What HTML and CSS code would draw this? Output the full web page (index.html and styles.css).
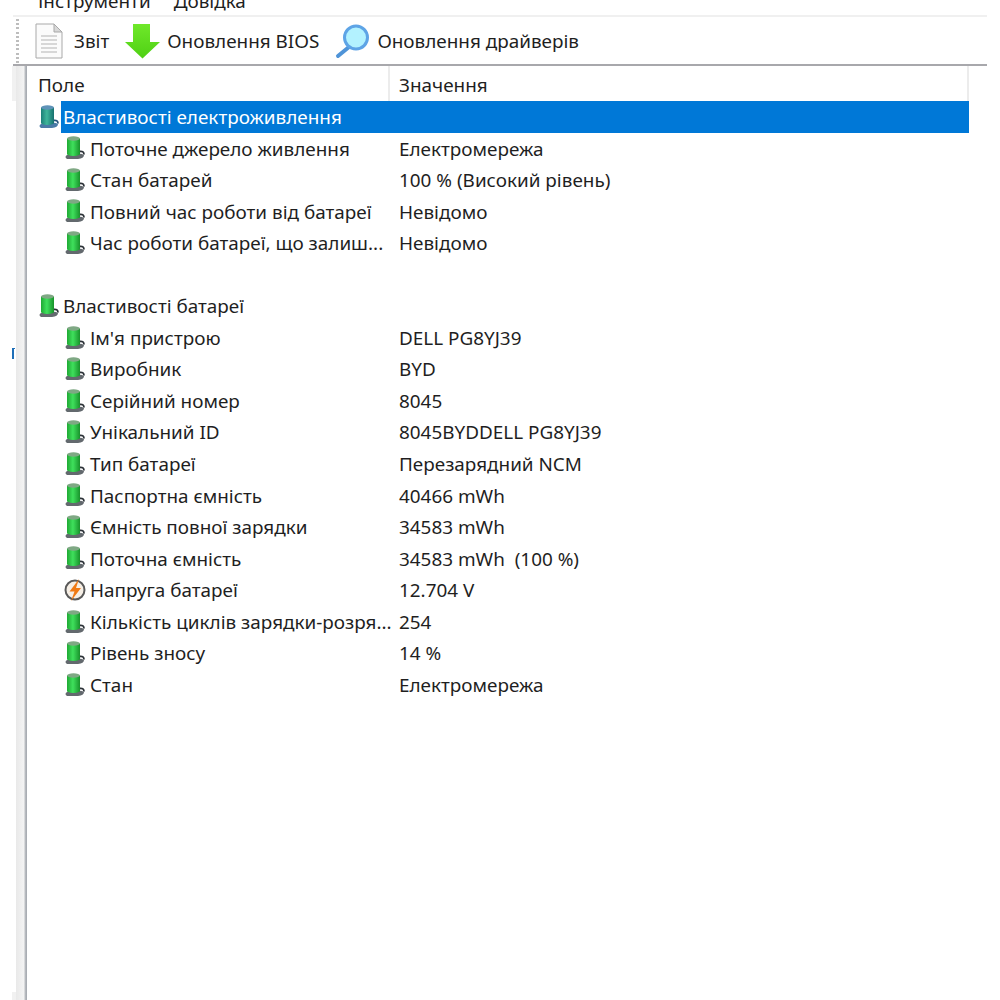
FILE: index.html
```html
<!DOCTYPE html>
<html lang="uk">

<head>
  <meta charset="UTF-8" />
  <meta name="viewport" content="width=device-width, initial-scale=1.0" />
  <title>Електроживлення</title>
  <link rel="stylesheet" href="styles.css">
</head>

<body>
  <svg class="icon-defs" width="0" height="0">
    <defs>
      <linearGradient id="green-body" x1="0" x2="1" y1="0" y2="0">
        <stop offset="0" stop-color="#1fa934" />
        <stop offset="0.45" stop-color="#3fe05c" />
        <stop offset="1" stop-color="#18922b" />
      </linearGradient>
      <linearGradient id="teal-body" x1="0" x2="1" y1="0" y2="0">
        <stop offset="0" stop-color="#1c7f78" />
        <stop offset="0.45" stop-color="#3fb59a" />
        <stop offset="1" stop-color="#17706f" />
      </linearGradient>
      <linearGradient id="arrow-fill" x1="0" x2="0" y1="0" y2="1">
        <stop offset="0" stop-color="#6fe82a" />
        <stop offset="1" stop-color="#4fd014" />
      </linearGradient>
      <symbol id="battery" viewBox="0 0 22 24">
        <path d="M3 19q-3 2 0 4h11q6-.5 6-4-3-2-6-1z" fill="#63696e" />
        <path d="M15 15.500q5-1 5 3" fill="none" stroke="#2c3238" stroke-width="1.800" />
        <path d="M3 2.500h13v16q-6.500 3-13 0z" fill="url(#green-body)" />
        <ellipse cx="9.500" cy="2.500" rx="6.500" ry="2.200" fill="#7fa884" />
      </symbol>
      <symbol id="battery-selected" viewBox="0 0 22 24">
        <path d="M3 19q-3 2 0 4h11q6-.5 6-4-3-2-6-1z" fill="#4a7aa6" />
        <path d="M15 15.500q5-1 5 3" fill="none" stroke="#24527c" stroke-width="1.800" />
        <path d="M3 2.500h13v16q-6.500 3-13 0z" fill="url(#teal-body)" />
        <ellipse cx="9.500" cy="2.500" rx="6.500" ry="2.200" fill="#5f93b8" />
      </symbol>
    </defs>
  </svg>

  <div class="menu-bar">
    <span>Інструменти</span>
    <span>Довідка</span>
  </div>

  <div class="tool-bar">
    <div class="tool tool-report">
      <svg width="28" height="36" viewBox="0 0 28 36">
        <path d="M1 1h18l8 8v26H1z" fill="#fbfbfb" stroke="#a9a9a9" />
        <path d="M19 1v8h8z" fill="#d8d8d8" stroke="#a9a9a9" />
        <path d="M6 13h16M6 17h16M6 21h16M6 25h16M6 29h16" stroke="#b4b4b4" stroke-width="1.200" />
      </svg>
      <span>Звіт</span>
    </div>
    <div class="tool tool-bios">
      <svg width="36" height="36" viewBox="0 0 36 36">
        <path d="M8 1h17v18h10L17.500 35.500 0 19h8z" fill="url(#arrow-fill)" />
      </svg>
      <span>Оновлення BIOS</span>
    </div>
    <div class="tool tool-drivers">
      <svg width="36" height="36" viewBox="0 0 36 36">
        <path d="M14 24L3 33" stroke="#4f94d8" stroke-width="4" stroke-linecap="round" />
        <circle cx="21" cy="14.500" r="11.500" fill="#b3f2ff" stroke="#5ea4e6" stroke-width="3" />
      </svg>
      <span>Оновлення драйверів</span>
    </div>
  </div>

  <div class="main">
    <div class="side-rail"></div>
    <div class="list">
      <div class="list-head">
        <div class="head-cell head-field">Поле</div>
        <div class="head-cell head-value">Значення</div>
      </div>

      <div class="row group selected">
        <svg class="row-icon"><use href="#battery-selected" /></svg>
        <div class="row-name">Властивості електроживлення</div>
      </div>
      <div class="row">
        <svg class="row-icon"><use href="#battery" /></svg>
        <div class="row-name">Поточне джерело живлення</div>
        <div class="row-value">Електромережа</div>
      </div>
      <div class="row">
        <svg class="row-icon"><use href="#battery" /></svg>
        <div class="row-name">Стан батарей</div>
        <div class="row-value">100 % (Високий рівень)</div>
      </div>
      <div class="row">
        <svg class="row-icon"><use href="#battery" /></svg>
        <div class="row-name">Повний час роботи від батареї</div>
        <div class="row-value">Невідомо</div>
      </div>
      <div class="row">
        <svg class="row-icon"><use href="#battery" /></svg>
        <div class="row-name">Час роботи батареї, що залиш...</div>
        <div class="row-value">Невідомо</div>
      </div>

      <div class="row"></div>

      <div class="row group">
        <svg class="row-icon"><use href="#battery" /></svg>
        <div class="row-name">Властивості батареї</div>
      </div>
      <div class="row">
        <svg class="row-icon"><use href="#battery" /></svg>
        <div class="row-name">Ім'я пристрою</div>
        <div class="row-value">DELL PG8YJ39</div>
      </div>
      <div class="row">
        <svg class="row-icon"><use href="#battery" /></svg>
        <div class="row-name">Виробник</div>
        <div class="row-value">BYD</div>
      </div>
      <div class="row">
        <svg class="row-icon"><use href="#battery" /></svg>
        <div class="row-name">Серійний номер</div>
        <div class="row-value">8045</div>
      </div>
      <div class="row">
        <svg class="row-icon"><use href="#battery" /></svg>
        <div class="row-name">Унікальний ID</div>
        <div class="row-value">8045BYDDELL PG8YJ39</div>
      </div>
      <div class="row">
        <svg class="row-icon"><use href="#battery" /></svg>
        <div class="row-name">Тип батареї</div>
        <div class="row-value">Перезарядний NCM</div>
      </div>
      <div class="row">
        <svg class="row-icon"><use href="#battery" /></svg>
        <div class="row-name">Паспортна ємність</div>
        <div class="row-value">40466 mWh</div>
      </div>
      <div class="row">
        <svg class="row-icon"><use href="#battery" /></svg>
        <div class="row-name">Ємність повної зарядки</div>
        <div class="row-value">34583 mWh</div>
      </div>
      <div class="row">
        <svg class="row-icon"><use href="#battery" /></svg>
        <div class="row-name">Поточна ємність</div>
        <div class="row-value">34583 mWh&nbsp; (100 %)</div>
      </div>
      <div class="row">
        <svg class="row-icon" viewBox="0 0 22 24">
          <circle cx="11" cy="12" r="9.500" fill="#f6efe6" stroke="#595959" stroke-width="2" />
          <path d="M15 1L5.500 13.500h5L7 23l10-13h-5z" fill="#f07a14" />
        </svg>
        <div class="row-name">Напруга батареї</div>
        <div class="row-value">12.704 V</div>
      </div>
      <div class="row">
        <svg class="row-icon"><use href="#battery" /></svg>
        <div class="row-name">Кількість циклів зарядки-розря...</div>
        <div class="row-value">254</div>
      </div>
      <div class="row">
        <svg class="row-icon"><use href="#battery" /></svg>
        <div class="row-name">Рівень зносу</div>
        <div class="row-value">14 %</div>
      </div>
      <div class="row">
        <svg class="row-icon"><use href="#battery" /></svg>
        <div class="row-name">Стан</div>
        <div class="row-value">Електромережа</div>
      </div>
    </div>
  </div>
  <div class="stray-mark"></div>
</body>

</html>
```

FILE: styles.css
```css
body {
  font-family: "Noto Sans", "Open Sans", sans-serif;
  font-size: 18.9px;
  margin: 0;
  padding: 0;
  background-color: #ffffff;
  color: #1f1f1f;
  height: 1000px;
  overflow: hidden;
}

.icon-defs {
  display: block;
  height: 0;
}

.menu-bar {
  display: flex;
  align-items: flex-end;
  gap: 23px;
  height: 13px;
  padding-left: 38px;
  padding-bottom: 2px;
  overflow: hidden;
  line-height: 24px;
}

.tool-bar {
  display: flex;
  align-items: center;
  height: 47px;
  width: 974px;
  margin-left: 13px;
  border-top: 2px solid #f0f0f0;
  border-bottom: 2px solid #a8a8ac;
}

/* dotted grip at the start of the toolbar */
.tool-bar::before {
  content: "";
  width: 3px;
  height: 44px;
  margin-left: 3px;
  background: repeating-linear-gradient(to bottom, #bdbdbd 0, #bdbdbd 2px, #ffffff 2px, #ffffff 4.2px);
}

.tool {
  display: flex;
  align-items: center;
}

.tool-report {
  margin-left: 16px;
  gap: 11px;
}

.tool-bios {
  margin-left: 16px;
  gap: 6px;
}

.tool-drivers {
  margin-left: 16px;
  gap: 6px;
}

.main {
  display: flex;
  height: 936px;
}

/* grey strip on the left of the list */
.side-rail {
  position: relative;
  width: 11px;
  margin-left: 16px;
  background: linear-gradient(to right, #e9e9e9, #f3f3f3 70%, #a9adb3 90%);
  flex-shrink: 0;
}

.side-rail::before,
.side-rail::after {
  content: "";
  position: absolute;
  left: -4px;
  width: 4px;
  background-color: #f1f1f1;
}

.side-rail::before {
  top: 0;
  height: 35px;
}

.side-rail::after {
  top: 926px;
  height: 10px;
}

.list {
  width: 941px;
  margin-left: 1px;
}

.list-head {
  display: flex;
  height: 35px;
}

.head-cell {
  height: 35px;
  line-height: 38px;
  box-sizing: border-box;
}

.head-field {
  width: 362px;
  padding-left: 10px;
  border-right: 2px solid #ececec;
}

.head-value {
  flex-grow: 1;
  padding-left: 9px;
  border-right: 2px solid #ececec;
}

.row {
  display: flex;
  align-items: center;
  height: 31.55px;
  white-space: nowrap;
}

.row-icon {
  width: 22px;
  height: 24px;
  flex-shrink: 0;
  margin-left: 36px;
}

.row-name,
.row-value {
  height: 31.55px;
  line-height: 33.5px;
}

.row-name {
  width: 291px;
  flex-shrink: 0;
  margin-left: 4px;
}

.row-value {
  margin-left: 18px;
}

.group .row-icon {
  margin-left: 10px;
}

.group .row-name {
  width: auto;
  margin-left: 3px;
}

.selected .row-name {
  flex-grow: 1;
  margin-left: 1px;
  padding-left: 2px;
  background-color: #0078d7;
  color: #ffffff;
}

/* cut off scrap of a letter left of the rail */
.stray-mark {
  position: absolute;
  left: 12px;
  top: 348px;
  width: 1px;
  height: 10px;
  border-left: 2px solid #1f6fb8;
  border-top: 1px solid #1f6fb8;
}
```
